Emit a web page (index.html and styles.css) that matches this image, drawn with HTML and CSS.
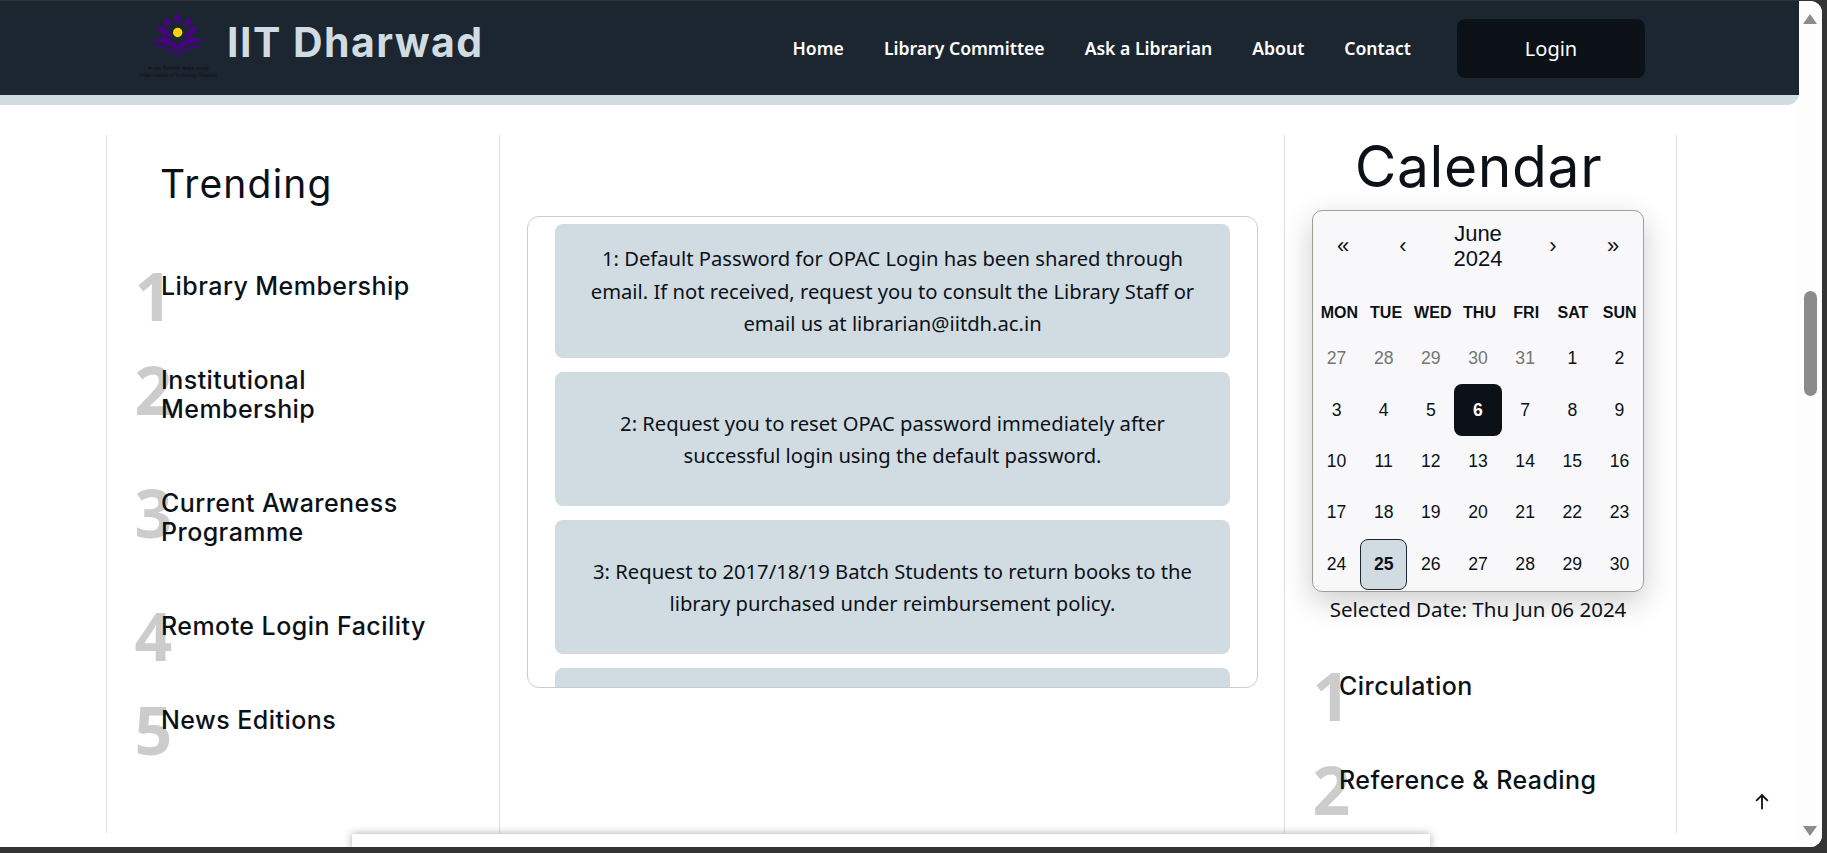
FILE: index.html

```html
<!DOCTYPE html>
<html lang="en">
  <head>
    <title>IIT Dharwad Library</title>
    <link rel="stylesheet" href="styles.css">
  </head>
  <body>
    <div class="window">
      <div class="page">
        <div class="topbar">
          <header class="header">
            <div class="logo">
              <svg class="logo-mark" viewBox="0 0 60 46" width="60" height="46">
                <g fill="#45057f">
                  <path d="M29.7 0.7l4.2 6.5-4.2 4.6-4.2-4.6z"/>
                  <path d="M16 5.7l6.7 3.3 1 3.3-3.7 3-3.7-4.6z"/>
                  <path d="M43.4 5.7l-6.7 3.3-1 3.3 3.7 3 3.7-4.6z"/>
                  <path d="M7.7 14l8.3 0.7 9.3 11-11-3.4z"/>
                  <path d="M51.7 14l-8.3 0.7-9.3 11 11-3.4z"/>
                  <path d="M1 29c8-2 14-4 19-7l-1 4c4 1 8 4 10.7 8 2.7-4 6.7-7 10.7-8l-1-4c5 3 11 5 19 7-10 0-20 3-28.7 10-8.7-7-18.7-10-28.7-10z"/>
                  <path d="M6 33c9 0 17 3 23.7 9.500 6.7-6.500 14.700-9.500 23.700-9.500l-3 2.500c-8 0.500-15 4-20.700 9.500-5.700-5.500-12.700-9-20.700-9.500z"/>
                </g>
                <circle cx="29.7" cy="20.5" r="4.7" fill="#ffd20a"/>
              </svg>
              <span class="logo-hi">भारतीय प्रौद्योगिकी संस्थान धारवाड़</span>
              <span class="logo-en">Indian Institute of Technology Dharwad</span>
            </div>
            <div class="brand">IIT Dharwad</div>
            <nav class="menu">
              <a>Home</a>
              <a>Library Committee</a>
              <a>Ask a Librarian</a>
              <a>About</a>
              <a>Contact</a>
            </nav>
            <button class="login">Login</button>
          </header>
        </div>

        <div class="columns">
          <section class="col col-side">
            <h2 class="trending-title">Trending</h2>
            <ul class="ranked">
              <li><span class="num">1</span><span class="label">Library Membership</span></li>
              <li><span class="num">2</span><span class="label">Institutional<br>Membership</span></li>
              <li><span class="num">3</span><span class="label">Current Awareness<br>Programme</span></li>
              <li><span class="num">4</span><span class="label">Remote Login Facility</span></li>
              <li><span class="num">5</span><span class="label">News Editions</span></li>
            </ul>
          </section>

          <section class="col-mid">
            <div class="notices">
              <div class="notice">1: Default Password for OPAC Login has been shared through email. If not received, request you to consult the Library Staff or email us at librarian@iitdh.ac.in</div>
              <div class="notice">2: Request you to reset OPAC password immediately after successful login using the default password.</div>
              <div class="notice">3: Request to 2017/18/19 Batch Students to return books to the library purchased under reimbursement policy.</div>
              <div class="notice"></div>
            </div>
          </section>

          <section class="col col-cal">
            <h2 class="cal-title">Calendar</h2>
            <div class="cal-wrap">
              <div class="calendar">
                <div class="cal-nav">
                  <span class="cal-arrow">«</span>
                  <span class="cal-arrow">‹</span>
                  <span class="cal-month">June 2024</span>
                  <span class="cal-arrow">›</span>
                  <span class="cal-arrow">»</span>
                </div>
                <div class="cal-week">
                  <span>MON</span><span>TUE</span><span>WED</span><span>THU</span><span>FRI</span><span>SAT</span><span>SUN</span>
                </div>
                <div class="cal-days">
                  <span class="off">27</span><span class="off">28</span><span class="off">29</span><span class="off">30</span><span class="off">31</span><span>1</span><span>2</span>
                  <span>3</span><span>4</span><span>5</span><span class="active">6</span><span>7</span><span>8</span><span>9</span>
                  <span>10</span><span>11</span><span>12</span><span>13</span><span>14</span><span>15</span><span>16</span>
                  <span>17</span><span>18</span><span>19</span><span>20</span><span>21</span><span>22</span><span>23</span>
                  <span>24</span><span class="today">25</span><span>26</span><span>27</span><span>28</span><span>29</span><span>30</span>
                </div>
              </div>
              <p class="cal-picked">Selected Date: Thu Jun 06 2024</p>
            </div>
            <ul class="ranked ranked-cal">
              <li><span class="num">1</span><span class="label">Circulation</span></li>
              <li><span class="num">2</span><span class="label">Reference &amp; Reading</span></li>
            </ul>
          </section>
        </div>

        <div class="footer-peek"></div>
        <svg class="to-top" viewBox="0 0 16 16" width="18" height="18">
          <path d="M8 14.5V2M2.8 7L8 1.8 13.2 7" fill="none" stroke="#0c1118" stroke-width="1.6"/>
        </svg>
      </div>

      <div class="scrollbar">
        <span class="arrow-up"></span>
        <span class="thumb"></span>
        <span class="arrow-down"></span>
      </div>
    </div>
  </body>
</html>
```

FILE: styles.css

```css
* {
  box-sizing: border-box;
}

html,
body {
  margin: 0;
  height: 853px;
  overflow: hidden;
  background-color: #333333;
}

body {
  font-family: "Noto Sans", "Open Sans", sans-serif;
  color: #0c1118;
}

.window {
  display: flex;
  width: 1822px;
  height: 846px;
  margin-top: 1px;
  background-color: #ffffff;
  border-radius: 0 12px 12px 0;
  overflow: hidden;
}

.page {
  position: relative;
  width: 1799px;
  height: 846px;
  overflow: hidden;
}

/* header */
.topbar {
  background-color: #d1dce2;
  padding-bottom: 10px;
  border-radius: 0 0 12px 0;
}

.header {
  display: flex;
  align-items: center;
  height: 94px;
  padding-left: 137px;
  padding-right: 154px;
  background-color: #1c2630;
}

.logo {
  display: flex;
  flex-direction: column;
  align-items: center;
  width: 82px;
  height: 78px;
  padding-top: 2px;
  margin-top: 2px;
  color: #0c1118;
}

.logo-hi {
  margin-top: 6px;
  font-size: 5px;
  line-height: 8px;
  white-space: nowrap;
}

.logo-en {
  font-family: "Liberation Sans", sans-serif;
  font-size: 4.5px;
  line-height: 8px;
  white-space: nowrap;
}

.brand {
  margin-left: 8px;
  margin-top: -13px;
  font-family: Inter, sans-serif;
  font-size: 41px;
  font-weight: 700;
  letter-spacing: 1.45px;
  color: #d1dce2;
}

.menu {
  display: flex;
  gap: 40px;
  margin-left: auto;
  margin-top: -1px;
  font-family: "Noto Sans", sans-serif;
  font-size: 17.6px;
  font-weight: 600;
  color: #ffffff;
}

.login {
  width: 188px;
  height: 59px;
  margin-left: 46px;
  border: none;
  border-radius: 8px;
  background-color: #0c1118;
  color: #ffffff;
  font-family: "Noto Sans", sans-serif;
  font-size: 20px;
}

/* three columns */
.columns {
  display: flex;
  height: 698px;
  margin-top: 30px;
  margin-left: 106px;
  width: 1571px;
}

.col {
  width: 393px;
  height: 100%;
  border-left: 1px solid #dee2e6;
  border-right: 1px solid #dee2e6;
}

.col-side {
  width: 394px;
}

.col-mid {
  flex: 1;
  padding-top: 81px;
  padding-left: 27px;
  padding-right: 26px;
}

.trending-title,
.cal-title {
  margin: 0;
  font-family: Inter, sans-serif;
  font-weight: 400;
}

.trending-title {
  margin-top: 26px;
  margin-left: 53px;
  font-size: 39px;
  line-height: 46px;
  letter-spacing: 1.2px;
}

.ranked {
  list-style: none;
  margin: 65px 0 0;
  padding: 0 0 0 25px;
}

.ranked li {
  display: flex;
  align-items: flex-start;
  margin-bottom: 65px;
}

.num {
  flex: none;
  width: 26.5px;
  margin-top: -10px;
  margin-left: 2.5px;
  margin-bottom: -37px;
  font-family: "Open Sans", sans-serif;
  font-size: 66px;
  font-weight: 700;
  line-height: 66px;
  color: #cccccc;
}

.label {
  position: relative;
  font-family: Inter, sans-serif;
  font-size: 25px;
  font-weight: 500;
  line-height: 29px;
  letter-spacing: 0.45px;
}

/* notices */
.notices {
  height: 472px;
  padding: 7px 27px 0;
  border: 1px solid #cccccc;
  border-radius: 12px;
  overflow: hidden;
}

.notice {
  display: flex;
  align-items: center;
  justify-content: center;
  height: 134px;
  margin-bottom: 14px;
  padding: 0 26px;
  background-color: #d1dce2;
  border-radius: 8px;
  text-align: center;
  font-size: 20.2px;
  line-height: 32.5px;
}

/* calendar */
.col-cal {
  text-align: center;
}

.cal-title {
  padding-right: 4px;
  font-size: 57px;
  line-height: 64px;
  letter-spacing: 0.6px;
}

.cal-wrap {
  width: 332px;
  margin-top: 11px;
  margin-left: 27px;
}

.calendar {
  height: 382px;
  background-color: #f8f8fa;
  border: 1px solid #a0a096;
  border-radius: 10px;
  box-shadow: 0 10px 30px rgba(0, 0, 0, 0.2);
  font-family: "Liberation Sans", Arial, sans-serif;
}

.cal-nav {
  display: flex;
  align-items: center;
  height: 70px;
  font-size: 22px;
  line-height: 25px;
}

.cal-arrow {
  width: 60px;
  margin-top: -2px;
}

.cal-month {
  flex: 1;
  padding: 0 20px;
}

.cal-week,
.cal-days {
  display: grid;
  grid-template-columns: repeat(7, 1fr);
}

.cal-week {
  height: 40px;
  margin-top: 12px;
  padding-left: 3px;
  align-items: center;
  font-size: 16px;
  font-weight: 700;
}

.cal-days {
  grid-auto-rows: 51.4px;
  font-size: 17.6px;
}

.cal-days span {
  display: flex;
  align-items: center;
  justify-content: center;
  border-radius: 8px;
}

.cal-days .off {
  color: #757575;
}

.cal-days .active {
  background-color: #0c1118;
  color: #ffffff;
  font-weight: 700;
}

.cal-days .today {
  background-color: #d1dce2;
  border: 1px solid #1c2630;
  font-weight: 700;
}

.cal-picked {
  position: relative;
  margin: 0;
  padding: 2px 0 4px;
  font-size: 20.5px;
  line-height: 30px;
}

.ranked-cal {
  margin-top: 44px;
  text-align: left;
}

/* bits lying over the page */
.footer-peek {
  position: absolute;
  left: 352px;
  top: 833px;
  width: 1078px;
  height: 14px;
  background-color: #ffffff;
  box-shadow: 0 0 8px rgba(0, 0, 0, 0.35);
}

.to-top {
  position: absolute;
  left: 1753px;
  top: 792px;
}

/* scrollbar */
.scrollbar {
  position: relative;
  flex: none;
  width: 23px;
  background-color: #fdfdfd;
}

.arrow-up,
.arrow-down {
  position: absolute;
  left: 4px;
  width: 0;
  height: 0;
  border-left: 7px solid transparent;
  border-right: 7px solid transparent;
}

.arrow-up {
  top: 13px;
  border-bottom: 10px solid #8b8b8b;
}

.arrow-down {
  bottom: 11px;
  border-top: 10px solid #8b8b8b;
}

.thumb {
  position: absolute;
  left: 5px;
  top: 290px;
  width: 13px;
  height: 105px;
  border-radius: 7px;
  background-color: #8b8b8b;
}
```
